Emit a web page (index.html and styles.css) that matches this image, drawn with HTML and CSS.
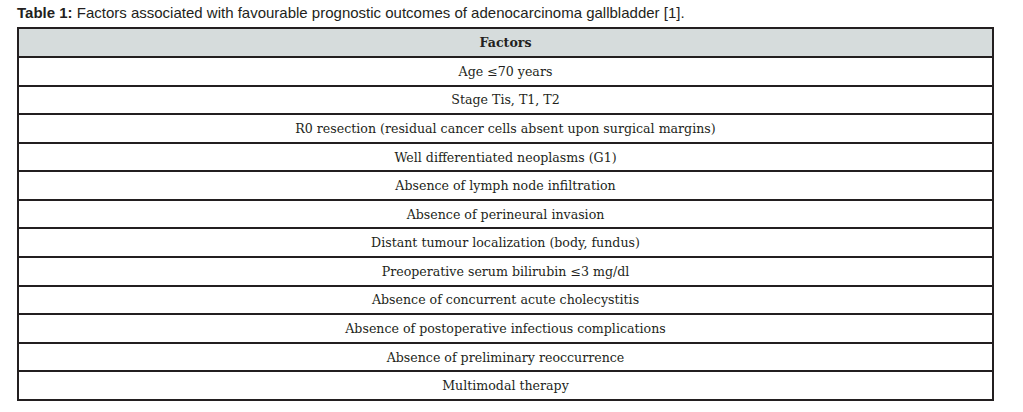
FILE: index.html
```html
<!DOCTYPE html>
<html>
<head>
<meta charset="utf-8">
<link rel="stylesheet" href="styles.css">
</head>
<body>
<div class="page">
  <p class="caption"><b>Table 1:</b> Factors associated with favourable prognostic outcomes of adenocarcinoma gallbladder [1].</p>
  <table class="factors">
    <thead>
      <tr><th>Factors</th></tr>
    </thead>
    <tbody>
      <tr><td>Age ≤70 years</td></tr>
      <tr><td>Stage Tis, T1, T2</td></tr>
      <tr><td>R0 resection (residual cancer cells absent upon surgical margins)</td></tr>
      <tr><td>Well differentiated neoplasms (G1)</td></tr>
      <tr><td>Absence of lymph node infiltration</td></tr>
      <tr><td>Absence of perineural invasion</td></tr>
      <tr><td>Distant tumour localization (body, fundus)</td></tr>
      <tr><td>Preoperative serum bilirubin ≤3 mg/dl</td></tr>
      <tr><td>Absence of concurrent acute cholecystitis</td></tr>
      <tr><td>Absence of postoperative infectious complications</td></tr>
      <tr><td>Absence of preliminary reoccurrence</td></tr>
      <tr><td>Multimodal therapy</td></tr>
    </tbody>
  </table>
</div>
</body>
</html>
```
FILE: styles.css
```css
html, body {
  margin: 0;
  padding: 0;
  background: #fff;
}
.page {
  padding: 4px 0 0 17px;
  width: 977px;
}
.caption {
  margin: 0 0 6px 0;
  font-family: "Liberation Sans", Arial, sans-serif;
  font-size: 15px;
  line-height: 17px;
  color: #231f20;
}
.caption b {
  font-weight: bold;
}
.factors {
  width: 977px;
  border-collapse: collapse;
  font-family: "DejaVu Serif", "Liberation Serif", serif;
  font-size: 12.6px;
  color: #231f20;
}
.factors th,
.factors td {
  border: 2px solid #231f20;
  text-align: center;
  padding: 1px 0 0 0;
  height: 25.58px;
  line-height: 16px;
}
.factors th {
  background: #d6dcdc;
  font-weight: bold;
  height: 26px;
}
```
